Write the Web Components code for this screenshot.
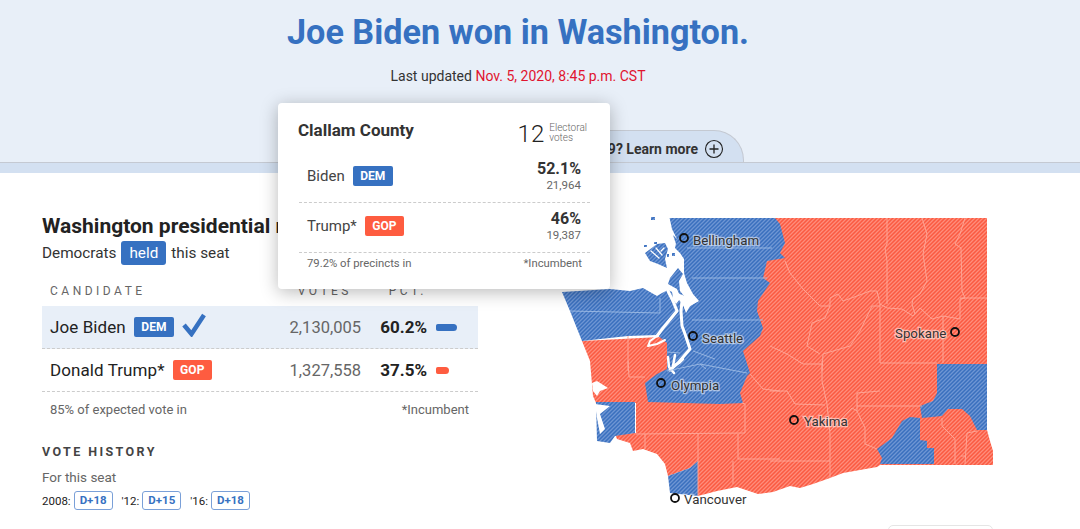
<!DOCTYPE html>
<html><head><meta charset="utf-8"><style>
html,body{margin:0;height:529px;overflow:hidden;background:#fff;font-family:Roboto,"Liberation Sans",sans-serif;color:#222}
</style></head><body>
<race-page></race-page>
<template id="map-t"><style>
:host{display:block;width:450px;height:300px}
svg{display:block}
text{font:13.3px Roboto,sans-serif;fill:#333;paint-order:stroke;stroke:rgba(255,255,255,.5);stroke-width:2.5px}
.b{fill:url(#hb)}.r{fill:url(#hr)}
.l{fill:none;stroke:#ffa899;stroke-width:.9}
.lb{fill:none;stroke:#9dbbe4;stroke-width:.9}
.w{fill:none;stroke:#fff;stroke-linejoin:round;stroke-linecap:round}
.c{fill:none;stroke:#111;stroke-width:1.8}
</style>
<svg width="450" height="300" viewBox="550 210 450 300">
<defs>
<pattern id="hb" width="4" height="4" patternUnits="userSpaceOnUse"><rect width="4" height="4" fill="#3a70be"/><path d="M-1 1 1-1M0 4 4 0M3 5 5 3" stroke="#6e96d4" stroke-width="1.3"/></pattern>
<pattern id="hr" width="4" height="4" patternUnits="userSpaceOnUse"><rect width="4" height="4" fill="#fb5a41"/><path d="M-1 1 1-1M0 4 4 0M3 5 5 3" stroke="#ff8d7b" stroke-width="1.3"/></pattern>
</defs>
<path class="r" d="M775 217H987V429L990 440 993 450 993 464H880L877 466 843 472 830 477 813 483 800 487 790 485 773 491 758 493 737 486 717 490 698 495V460L690 467 668 475 665 463 657 453 643 448 633 450 630 442 617 438 615 433 636 432V402H596L593 395 590 360 582 340 680 335 740 300Z"/>
<path class="b" d="M668 217H775L780 223 785 242 780 252 785 257 767 260 763 277 770 282 758 300 757 310 763 327 760 335 743 350 750 372 747 375 740 392 743 402 720 403 648 401 645 382 657 373 667 368V342L657 334 628 335 582 340 570 310 562 291 610 288Z"/>
<path class="b" d="M596 401H635V432L615 435 610 442 597 440Z"/>
<path class="b" d="M670 492 668 475 690 467 698 460V495Z"/>
<path class="b" d="M937 363H987V429H977L970 415 962 408 948 408 942 415 922 417 920 405 933 400 937 392Z"/>
<path class="b" d="M877 448 892 437 902 420 910 416 920 417V439L927 440V447H934V463H880L882 457Z"/>
<path fill="#fff" d="M610 205H667L672 228 677 238 675 247 680 252 684 258 684 272 687 282 693 293 699 300 690 305 686 312 683 303 676 296 672 291 668 289 662 292 657 295 643 287 630 290 610 288Z"/>
<path class="b" d="M645 252 657 243 665 242 668 248 665 258 667 267 658 263 650 260Z"/>
<path class="b" d="M670 277 678 267 683 273 679 280 680 290 688 300 684 304 677 288 668 283Z"/>
<path class="b" d="M673 234 680 241 681 248 676 243Z"/>
<path class="b" d="M651 216h4v3h-4zM644 244h3v2h-3zM654 241h3v2h-3zM672 252h3v3h-3zM667 253h2v3h-2z"/>
<path class="w" stroke-width="1.2" d="M651 250 659 257M656 247 662 254M664 247 661 250"/>
<path class="w" stroke-width="3" d="M668 290 673 300 677 310 663 327 657 335"/>
<path class="w" stroke-width="2" d="M657 335 650 340 648 345 657 343 665 339"/>
<path class="w" stroke-width="3" d="M682 300 681 310 682 325 685 333 690 348 678 362 670 369"/>
<path class="w" stroke-width="2.5" d="M668 356 669 366 674 372M675 354 673 365 679 362 683 358"/>
<path fill="#fff" d="M672 290 698 300 690 305 686 310 680 298 676 303 673 298Z"/>
<path fill="#fff" d="M592 382 597 380 608 387 600 390 597 395 593 390Z"/>
<path fill="#fff" d="M595 403 610 405 600 413 605 428 600 433 597 417Z"/>
<path class="lb" d="M687 247H772M692 277H767M692 319H763M570 310 660 312V297M667 370 700 363 747 372M693 350 715 358M700 363 706 368M667 351 680 352"/>
<path class="l" d="M887 217V243L885 247 887 260V303M922 217 927 233 923 253 927 280 920 293 913 298 912 303 915 313M965 217 960 233 955 243 961 247 962 290 965 297 960 298V318M960 297H987M785 260 790 272 803 288 820 305H830V297L838 293 843 300 857 295 870 290H877L880 303 887 307 902 308 913 315 920 307 932 318 943 315 960 318M943 315V362M880 303V362M872 305H880M872 305 860 330 850 345 823 353 822 370M830 305 825 317 812 322 807 345 820 353M770 345 787 353 803 363H822M880 362H937M822 360V380L827 403 830 433V477M770 390H787L795 403 825 404M857 392 880 390M857 392V410L852 407 830 430M857 405H922M857 410 865 427V443L877 448M770 460H830M942 417V425L955 438V463M965 463 967 432 977 430M961 455H966M628 335V370M628 360 629 376H645M698 433V495M645 433V448M636 433 745 432M745 432V403L742 402M738 433V458H780M733 460V483M750 373 763 388 780 390"/>
<g><circle class="c" cx="684" cy="237" r="4"/><text x="693" y="244">Bellingham</text>
<circle class="c" cx="693" cy="335" r="4"/><text x="702" y="342">Seattle</text>
<circle class="c" cx="955" cy="331" r="4"/><text x="895" y="337">Spokane</text>
<circle class="c" cx="661" cy="382" r="4"/><text x="671" y="389">Olympia</text>
<circle class="c" cx="794" cy="419" r="4"/><text x="804" y="425">Yakima</text>
<circle class="c" cx="675" cy="497" r="4"/><text x="684" y="503">Vancouver</text></g>
</svg></template>

<template id="badge-t"><style>
:host{display:inline-flex;align-items:center;justify-content:center;height:20px;padding:0 7.5px;border-radius:2px;color:#fff;font:700 12px Roboto,sans-serif;background:#3671c1;box-sizing:border-box}
:host([party=gop]){background:#fe5c40}
</style><slot></slot></template>

<template id="row-t"><style>
:host{display:grid;grid-template-columns:1fr 100px 66px 51px;align-items:center;height:42px;border-bottom:1px dashed #ccc;padding-left:8px;font-size:17px}
:host([winner]){background:#e8eff8}
.n{display:flex;align-items:center;gap:8px;letter-spacing:.08px}
.v{text-align:right;color:#666;font-size:16.5px}
.p{text-align:right;font-weight:700}
.bar{height:7px;border-radius:2px 4px 4px 2px;margin-left:9px;background:#3671c1;width:var(--w)}
::slotted(svg){display:block;margin-top:-4px}
</style><div class="n"><slot></slot></div><div class="v"><slot name="v"></slot></div><div class="p"><slot name="p"></slot></div><div class="bar"></div></template>

<template id="tip-t"><style>
:host{position:absolute;left:278px;top:103px;width:332px;height:186px;background:#fff;border-radius:4px;box-shadow:0 3px 18px rgba(0,0,0,.28);box-sizing:border-box;padding:17px 20px 0 21px;z-index:5;color:#333}
.top{display:flex;justify-content:space-between;height:33px}
h3{margin:0 0 0 -1px;font:700 17px/20px Roboto,sans-serif;color:#333}
.ev{display:flex;gap:5px;margin-right:3px}
.ev b{font:300 24px/28px Roboto,sans-serif;color:#222}
.ev span{font:300 10px/10px Roboto,sans-serif;color:#666;padding-top:3px}
.r{display:flex;justify-content:space-between;align-items:center;height:49px;padding:0 9px 0 8px;border-bottom:1px dashed #ccc}
.nm{display:flex;align-items:center;gap:8px;font-size:15px;color:#444;margin-top:-3px}
.nums{text-align:right;font-weight:700;font-size:16px;line-height:16px}
.nums small{display:block;font-weight:400;font-size:11.5px;color:#666;line-height:17px}
.f{display:flex;justify-content:space-between;padding:4px 8px;font-size:11.3px;color:#666}
</style><div class="top"><h3>Clallam County</h3><div class="ev"><b>12</b><span>Electoral<br>votes</span></div></div>
<div class="r"><span class="nm">Biden <race-badge>DEM</race-badge></span><div class="nums">52.1%<small>21,964</small></div></div>
<div class="r"><span class="nm">Trump* <race-badge party="gop">GOP</race-badge></span><div class="nums">46%<small>19,387</small></div></div>
<div class="f"><span>79.2% of precincts in</span><span>*Incumbent</span></div></template>

<template id="page-t"><style>
:host{display:block;position:relative;width:1080px;height:529px;overflow:hidden}
header{height:162px;background:#e8eff8;box-sizing:border-box;padding:12px 44px 0 0;text-align:center;position:relative}
h1{margin:0;font:700 34.2px/40px Roboto,sans-serif;color:#3671c1}
.up{margin-top:14px;font-size:14px;line-height:20px;color:#333}.up span{color:#e0142f}
.tabline{height:10px;background:#d3e0f1;border-top:1px solid #c4c9d2}
.tab{position:absolute;right:336px;top:130px;width:240px;height:32px;box-sizing:border-box;background:#d3e0f1;border:1px solid #c4c9d2;border-bottom:0;border-radius:26px 30px 0 0;display:flex;align-items:center;justify-content:flex-end;gap:6px;padding:5px 19px 0 0;font-size:14px;font-weight:700;color:#333}
.tab svg{display:block}
main{display:flex;padding:41px 0 0 42px}
.left{width:436px;flex:none}
h2{margin:0;font:700 21px/24px Roboto,sans-serif;color:#222;white-space:nowrap}
.sub{display:flex;align-items:center;gap:5px;font-size:15.3px;height:26px;margin-top:2px;color:#333}
.held{background:#3671c1;color:#fff;border-radius:3px;padding:0 8px;height:24px;line-height:24px}
.th{display:grid;grid-template-columns:1fr 100px 66px 51px;padding-left:8px;font-size:12px;letter-spacing:3.5px;color:#666;height:30px;align-items:center;margin-top:10px}
.th span+span{text-align:right}.th span:nth-child(2){padding-right:9px}.th span:last-child{visibility:hidden}
.note{display:flex;justify-content:space-between;font-size:13px;color:#666;padding:10px 9px 0 8px;line-height:15px}
h4{margin:27px 0 0;font:700 12.5px/16px Roboto,sans-serif;letter-spacing:2.4px;color:#444}
.for{font-size:13.5px;color:#666;margin-top:9px;line-height:16px}
.hist{display:flex;align-items:center;gap:3px;font-size:11.5px;margin-top:6px;height:19px;color:#222}
.chip{border:1px solid #7aa0d8;border-radius:3px;color:#3671c1;font-weight:700;font-size:11.5px;height:19px;line-height:17px;box-sizing:border-box;padding:0 5px;margin-right:6px}
.mapc{margin-left:72px;margin-top:-3px;flex:none;position:relative}
.corner{position:absolute;left:888px;top:525px;width:105px;height:20px;border:1px solid #e5e5e5;border-radius:5px;box-sizing:border-box}
</style>
<header><h1>Joe Biden won in Washington.</h1><div class="up">Last updated <span>Nov. 5, 2020, 8:45 p.m. CST</span></div>
<div class="tab"><span>9? Learn more</span><svg width="20" height="20" viewBox="0 0 20 20"><circle cx="10" cy="10" r="8.5" fill="none" stroke="#222" stroke-width="1.1"/><path d="M10 5.5v9M5.5 10h9" stroke="#222" stroke-width="1.3"/></svg></div></header>
<div class="tabline"></div>
<main><section class="left"><h2>Washington presidential results</h2>
<div class="sub">Democrats <span class="held">held</span> this seat</div>
<div class="th"><span>CANDIDATE</span><span>VOTES</span><span>PCT.</span><span>.</span></div>
<race-row winner style="--w:21px">Joe Biden <race-badge>DEM</race-badge><svg width="24" height="24" viewBox="0 0 24 24"><path d="M2 12 9.5 21 22 2" fill="none" stroke="#3671c1" stroke-width="4.5"/></svg><span slot="v">2,130,005</span><span slot="p">60.2%</span></race-row>
<race-row gop style="--w:13px">Donald Trump* <race-badge party="gop">GOP</race-badge><span slot="v">1,327,558</span><span slot="p">37.5%</span></race-row>
<div class="note"><span>85% of expected vote in</span><span>*Incumbent</span></div>
<h4>VOTE HISTORY</h4><div class="for">For this seat</div>
<div class="hist">2008: <span class="chip">D+18</span> '12: <span class="chip">D+15</span> '16: <span class="chip">D+18</span></div>
</section><div class="mapc"><wa-map></wa-map></div></main>
<race-tip></race-tip><div class="corner"></div></template>
<script>
function def(n,t,f){customElements.define(n,class extends HTMLElement{constructor(){super();this.attachShadow({mode:'open'}).appendChild(document.getElementById(t).content.cloneNode(true));}connectedCallback(){if(f)f(this)}})}
def('race-badge','badge-t');
def('race-row','row-t',e=>{if(e.hasAttribute('gop'))e.shadowRoot.querySelector('.bar').style.background='#fe5c40'});
def('race-tip','tip-t');def('wa-map','map-t');def('race-page','page-t');
</script></body></html>
